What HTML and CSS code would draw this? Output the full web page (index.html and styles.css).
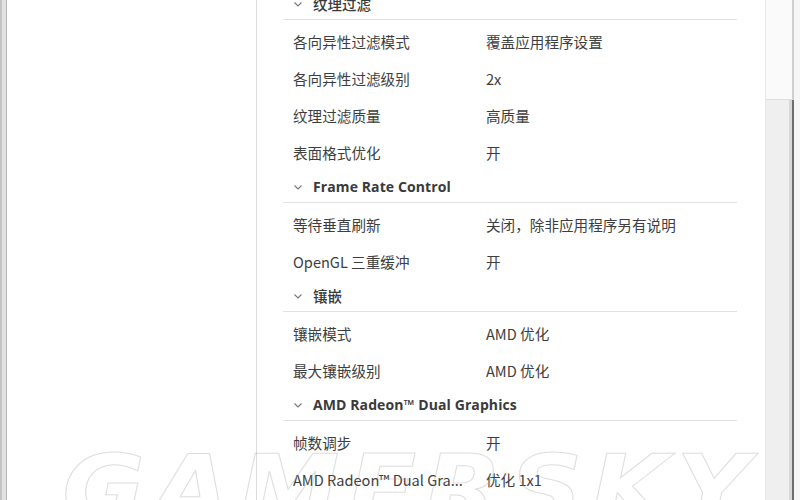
FILE: index.html
```html
<!DOCTYPE html>
<html lang="zh-CN">
<head>
<meta charset="utf-8">
<title>AMD 设置</title>
<link rel="stylesheet" href="styles.css">
</head>
<body>
<div class="window">
  <div class="edge"></div>
  <div class="sidebar"></div>
  <div class="main">
    <div class="content">
      <section class="group">
        <div class="group-head"><svg class="chev" width="8" height="5" viewBox="0 0 8 5"><polyline points="0.5,0.5 4,4 7.5,0.5" fill="none" stroke="#777" stroke-width="1.1"/></svg><span class="cjk">纹理过滤</span></div>
        <div class="items">
          <div class="row"><span class="label">各向异性过滤模式</span><span class="value">覆盖应用程序设置</span></div>
          <div class="row"><span class="label">各向异性过滤级别</span><span class="value">2x</span></div>
          <div class="row"><span class="label">纹理过滤质量</span><span class="value">高质量</span></div>
          <div class="row"><span class="label">表面格式优化</span><span class="value">开</span></div>
        </div>
      </section>
      <section class="group">
        <div class="group-head"><svg class="chev" width="8" height="5" viewBox="0 0 8 5"><polyline points="0.5,0.5 4,4 7.5,0.5" fill="none" stroke="#777" stroke-width="1.1"/></svg><span class="latin">Frame Rate Control</span></div>
        <div class="items">
          <div class="row"><span class="label">等待垂直刷新</span><span class="value">关闭，除非应用程序另有说明</span></div>
          <div class="row"><span class="label">OpenGL 三重缓冲</span><span class="value">开</span></div>
        </div>
      </section>
      <section class="group">
        <div class="group-head"><svg class="chev" width="8" height="5" viewBox="0 0 8 5"><polyline points="0.5,0.5 4,4 7.5,0.5" fill="none" stroke="#777" stroke-width="1.1"/></svg><span class="cjk">镶嵌</span></div>
        <div class="items">
          <div class="row"><span class="label">镶嵌模式</span><span class="value">AMD 优化</span></div>
          <div class="row"><span class="label">最大镶嵌级别</span><span class="value">AMD 优化</span></div>
        </div>
      </section>
      <section class="group">
        <div class="group-head"><svg class="chev" width="8" height="5" viewBox="0 0 8 5"><polyline points="0.5,0.5 4,4 7.5,0.5" fill="none" stroke="#777" stroke-width="1.1"/></svg><span class="latin">AMD Radeon™ Dual Graphics</span></div>
        <div class="items">
          <div class="row"><span class="label">帧数调步</span><span class="value">开</span></div>
          <div class="row"><span class="label">AMD Radeon™ Dual Gra...</span><span class="value">优化 1x1</span></div>
        </div>
      </section>
    </div>
  </div>
  <div class="scrollbar">
    <div class="thumb"></div>
    <div class="track"></div>
  </div>
  <div class="watermark" aria-hidden="true">GAMERSKY</div>
</div>
</body>
</html>
```

FILE: styles.css
```css
html, body {
  margin: 0;
  padding: 0;
  background: #fff;
}
body {
  width: 800px;
  height: 500px;
  overflow: hidden;
  font-family: "Noto Sans CJK SC", "Noto Sans", sans-serif;
  color: #3c3c3c;
}
.window {
  position: relative;
  display: flex;
  width: 800px;
  height: 500px;
  overflow: hidden;
}
.edge {
  flex: 0 0 4px;
  background: #e2e2e2;
  border-left: 2px solid #c4c4c4;
  border-right: 1px solid #b8b8b8;
}
.sidebar {
  flex: 0 0 249px;
  background: #fff;
  border-right: 1px solid #dcdcdc;
}
.main {
  flex: 1 1 auto;
  overflow: hidden;
  padding: 0 28px 0 26px;
}
.content {
  margin-top: -12px;
}
.group-head {
  display: flex;
  align-items: center;
  height: 31px;
  border-bottom: 1px solid #e2e2e2;
  padding-left: 11px;
  font-size: 14.5px;
  color: #3a3a3a;
}
.group-head .chev {
  margin-right: 11px;
  margin-top: 1px;
}
.group-head .cjk {
  font-weight: 500;
}
.group-head .latin {
  font-family: "Open Sans", "Noto Sans", sans-serif;
  font-weight: 700;
  font-size: 14px;
  letter-spacing: 0.1px;
}
.items {
  padding-top: 3px;
}
.row {
  display: flex;
  align-items: center;
  height: 37px;
  padding-left: 10px;
  font-size: 14.6px;
  color: #3e3e3e;
}
.label {
  flex: 0 0 193px;
  white-space: nowrap;
  overflow: hidden;
}
.value {
  white-space: nowrap;
}
.scrollbar {
  flex: 0 0 34px;
  display: flex;
  flex-direction: column;
  border-left: 1px solid #e8e8e8;
  background: #f6f6f6;
}
.thumb {
  height: 99px;
  margin-right: 6px;
  background: #fafafa;
  border-right: 2px solid #cfcfcf;
  border-bottom: 1px solid #dedede;
}
.track {
  flex: 1 1 auto;
  margin-right: 6px;
  background: #efefef;
  border-right: 2px solid #6e6e6e;
  box-shadow: inset -3px 0 0 #d8d8d8;
}
.watermark {
  position: absolute;
  left: 62px;
  top: 436px;
  font-family: "DejaVu Sans", sans-serif;
  font-weight: 700;
  font-style: italic;
  font-size: 92px;
  letter-spacing: 7px;
  color: transparent;
  -webkit-text-stroke: 1px rgba(160, 160, 160, 0.35);
  white-space: nowrap;
  pointer-events: none;
  transform: scaleX(1.1);
  transform-origin: left top;
}
```
